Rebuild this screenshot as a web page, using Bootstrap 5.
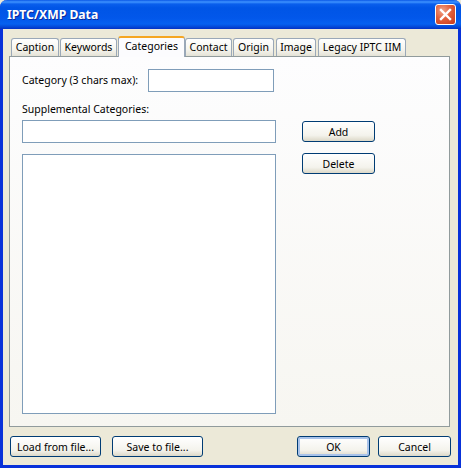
<!DOCTYPE html>
<html lang="en"><head><meta charset="utf-8"><title>IPTC/XMP Data</title>
<link href="https://cdn.jsdelivr.net/npm/bootstrap@5.3.0/dist/css/bootstrap.min.css" rel="stylesheet">
<style>
html,body{margin:0;width:461px;height:468px;overflow:hidden;background:#ece9d8}
body{font-family:"Noto Sans",sans-serif;font-size:10.5px;color:#000;line-height:13px}
.xp-win{width:461px;height:468px;background:#ece9d8;border:solid #0831d9;border-width:0 3px 3px 3px;border-radius:7px 7px 0 0}
.xp-title{height:29px;margin:0 -3px;padding:0 5px 0 7px;border-radius:7px 7px 0 0;background:linear-gradient(180deg,#0a58e6 0,#3e93ff 2px,#0a5fec 4px,#0055e6 8px,#0257ea 18px,#0561f0 24px,#0347d6 27px,#0331c4 29px);color:#fff;font-weight:700;font-size:12.2px;text-shadow:1px 1px 0 #0a2a9c}
.xp-close{width:21px;height:21px;padding:0;border:1px solid #fff;border-radius:3px;background:radial-gradient(circle at 35% 30%,#f0a48a 0,#e2603c 45%,#c8381a 100%);display:flex;align-items:center;justify-content:center}
.xp-client{padding:9px 0 0 6px}
.xp-tabs{padding-left:2px;height:18px;border:0;flex-wrap:nowrap;gap:1px;position:relative;z-index:1}
.xp-tabs .nav-link{height:18px;margin:0;padding:0;border:1px solid #9aa8b8;border-bottom:0;border-radius:3px 3px 0 0;background:linear-gradient(180deg,#fff 0,#f6f5ee 60%,#e4e2d6 100%);color:#000;font-size:10.5px;line-height:17px;text-align:center;display:block}
.xp-tabs .nav-link.active{height:21px;margin-top:-2px;line-height:16px;background:#fcfcfe;border-color:#9aa8b8;border-top:2px solid #f5a623;color:#000}
.t1{width:48px}.t2{width:57px}.t3{width:67px}.xp-tabs .nav-link.t4{width:47px;margin-left:-1px}.t5{width:41px}.xp-tabs .nav-link.t6{width:40px;margin-left:1px}.xp-tabs .nav-link.t7{width:88px;margin-left:1px}
.xp-pane{height:371px;width:441px;border:1px solid #919b9c;background:linear-gradient(180deg,#fdfdfe 0,#f7f6f1 100%);padding:12px}
.xp-field{height:23px;border:1px solid #7f9db9;border-radius:0;background:#fff;padding:0 3px;font-size:10.5px;box-shadow:none}
.f-cat{width:126px}
.f-wide{width:254px}
.lbl-cat{width:126px;padding-bottom:1px}
.xp-list{width:254px;height:260px;margin-top:11px;border:1px solid #7f9db9;background:#fff}
.xp-lbl{margin:0}
.lbl-sup{margin:11px 0 4px}
.xp-btn{height:21px;padding:0;border:1px solid #003c74;border-radius:3px;background:linear-gradient(180deg,#fff 0,#f4f3ec 70%,#dcd8c8 100%);color:#000;font-size:10.5px;line-height:18px}
.w-std{width:73px}.w-load{width:91px}
.xp-default{box-shadow:inset 0 0 0 2px #a9c3ea}
.xp-side{margin-left:26px;padding-top:1px}
.gap-del{margin-top:11px}
.gap-load{gap:11px}
.xp-foot{margin-top:9px;padding-left:1px;width:442px}
</style></head>
<body>
<div class="xp-win d-flex flex-column">
  <div class="xp-title d-flex align-items-center justify-content-between flex-shrink-0">
    <span>IPTC/XMP Data</span>
    <span class="xp-close"><svg width="13" height="13" viewBox="0 0 13 13"><path d="M2 2 11 11M11 2 2 11" stroke="#fff" stroke-width="2.4" stroke-linecap="square"/></svg></span>
  </div>
  <div class="xp-client">
    <ul class="nav nav-tabs xp-tabs">
      <li class="nav-item"><a class="nav-link t1" href="#">Caption</a></li>
      <li class="nav-item"><a class="nav-link t2" href="#">Keywords</a></li>
      <li class="nav-item"><a class="nav-link active t3" href="#">Categories</a></li>
      <li class="nav-item"><a class="nav-link t4" href="#">Contact</a></li>
      <li class="nav-item"><a class="nav-link t5" href="#">Origin</a></li>
      <li class="nav-item"><a class="nav-link t6" href="#">Image</a></li>
      <li class="nav-item"><a class="nav-link t7" href="#">Legacy IPTC IIM</a></li>
    </ul>
    <div class="xp-pane">
      <div class="d-flex align-items-center">
        <label class="xp-lbl lbl-cat" for="cat">Category (3 chars max):</label>
        <input id="cat" class="form-control xp-field f-cat" type="text">
      </div>
      <div class="d-flex">
        <div>
          <label class="xp-lbl lbl-sup d-block" for="sup">Supplemental Categories:</label>
          <input id="sup" class="form-control xp-field f-wide" type="text">
          <div class="xp-list"></div>
        </div>
        <div class="xp-side d-flex flex-column align-items-start">
          <div class="lbl-sup invisible">&nbsp;</div>
          <button class="btn xp-btn w-std" type="button">Add</button>
          <button class="btn xp-btn w-std gap-del" type="button">Delete</button>
        </div>
      </div>
    </div>
    <div class="xp-foot d-flex justify-content-between">
      <div class="d-flex gap-load">
        <button class="btn xp-btn w-load" type="button">Load from file...</button>
        <button class="btn xp-btn w-load" type="button">Save to file...</button>
      </div>
      <div class="d-flex gap-2">
        <button class="btn xp-btn w-std xp-default" type="button">OK</button>
        <button class="btn xp-btn w-std" type="button">Cancel</button>
      </div>
    </div>
  </div>
</div>
</body></html>
